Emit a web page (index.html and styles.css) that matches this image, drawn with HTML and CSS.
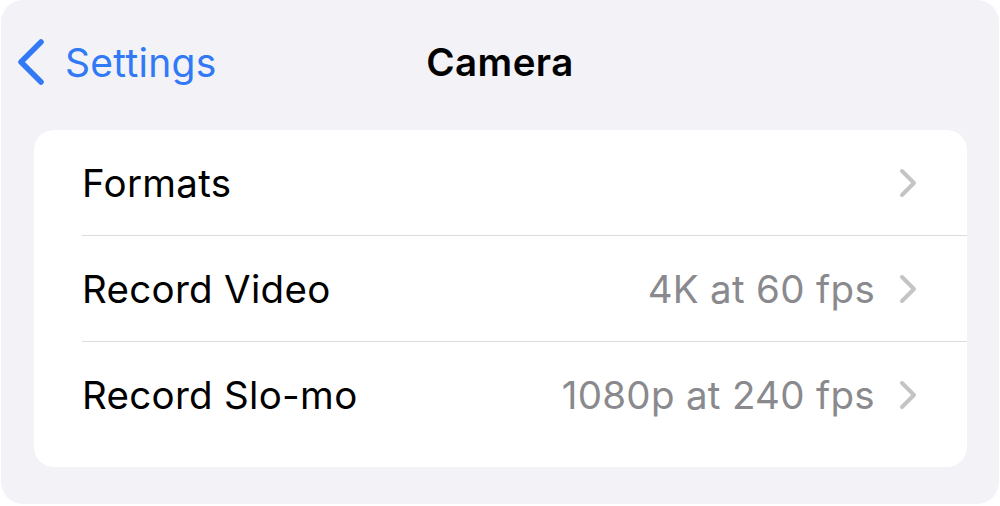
FILE: index.html
```html
<!DOCTYPE html>
<html>
<head>
<meta charset="utf-8">
<link rel="stylesheet" href="styles.css">
</head>
<body>
<div class="frame">
  <header class="nav">
    <div class="back">
      <svg class="back-icon" width="30" height="48" viewBox="0 0 30 48"><path d="M26 4 L6 24 L26 44" fill="none" stroke="#3179f5" stroke-width="5.5" stroke-linecap="round" stroke-linejoin="round"/></svg>
      <span class="back-label">Settings</span>
    </div>
    <h1 class="title">Camera</h1>
    <div></div>
  </header>
  <section class="card">
    <div class="row">
      <span class="label">Formats</span>
      <span class="value"></span>
      <svg class="chev" width="20" height="30" viewBox="0 0 20 30"><path d="M3 3 L15 15 L3 27" fill="none" stroke="#c4c4c7" stroke-width="4" stroke-linecap="round" stroke-linejoin="round"/></svg>
    </div>
    <div class="row">
      <span class="label">Record Video</span>
      <span class="value">4K at 60 fps</span>
      <svg class="chev" width="20" height="30" viewBox="0 0 20 30"><path d="M3 3 L15 15 L3 27" fill="none" stroke="#c4c4c7" stroke-width="4" stroke-linecap="round" stroke-linejoin="round"/></svg>
    </div>
    <div class="row">
      <span class="label">Record Slo-mo</span>
      <span class="value">1080p at 240 fps</span>
      <svg class="chev" width="20" height="30" viewBox="0 0 20 30"><path d="M3 3 L15 15 L3 27" fill="none" stroke="#c4c4c7" stroke-width="4" stroke-linecap="round" stroke-linejoin="round"/></svg>
    </div>
  </section>
</div>
</body>
</html>
```

FILE: styles.css
```css
* { box-sizing: border-box; }
html, body { margin: 0; padding: 0; background: #ffffff; }
body { font-family: Inter, "Noto Sans", sans-serif; }
.frame {
  margin: 0 1px;
  height: 504px;
  background: #f2f2f7;
  border-radius: 22px;
  padding: 0 32px 0 33px;
  display: flex;
  flex-direction: column;
}
.nav {
  height: 130px;
  display: grid;
  grid-template-columns: 1fr auto 1fr;
  align-items: center;
  margin: 0 -32px 0 -33px;
  padding-bottom: 6px;
}
.back {
  display: flex;
  align-items: center;
  padding-left: 14px;
  gap: 20px;
  color: #3179f5;
}
.back-icon { display: block; }
.back-label { font-size: 39px; font-weight: 400; letter-spacing: 0.3px; }
.title {
  margin: 0;
  font-size: 38.5px;
  font-weight: 600;
  color: #000;
  letter-spacing: 0.4px;
}
.card {
  background: #fff;
  border-radius: 20px;
  padding-bottom: 19px;
}
.row {
  height: 106px;
  display: flex;
  align-items: center;
  margin-left: 48px;
  padding-right: 48px;
  font-size: 38.5px;
  border-bottom: 1.5px solid #dcdce0;
}
.row:last-child { border-bottom: none; }
.label { color: #000; flex: 1; letter-spacing: 0.3px; }
.value { color: #8a8a8e; margin-right: 24px; letter-spacing: 0.3px; }
.chev { display: block; }
```
